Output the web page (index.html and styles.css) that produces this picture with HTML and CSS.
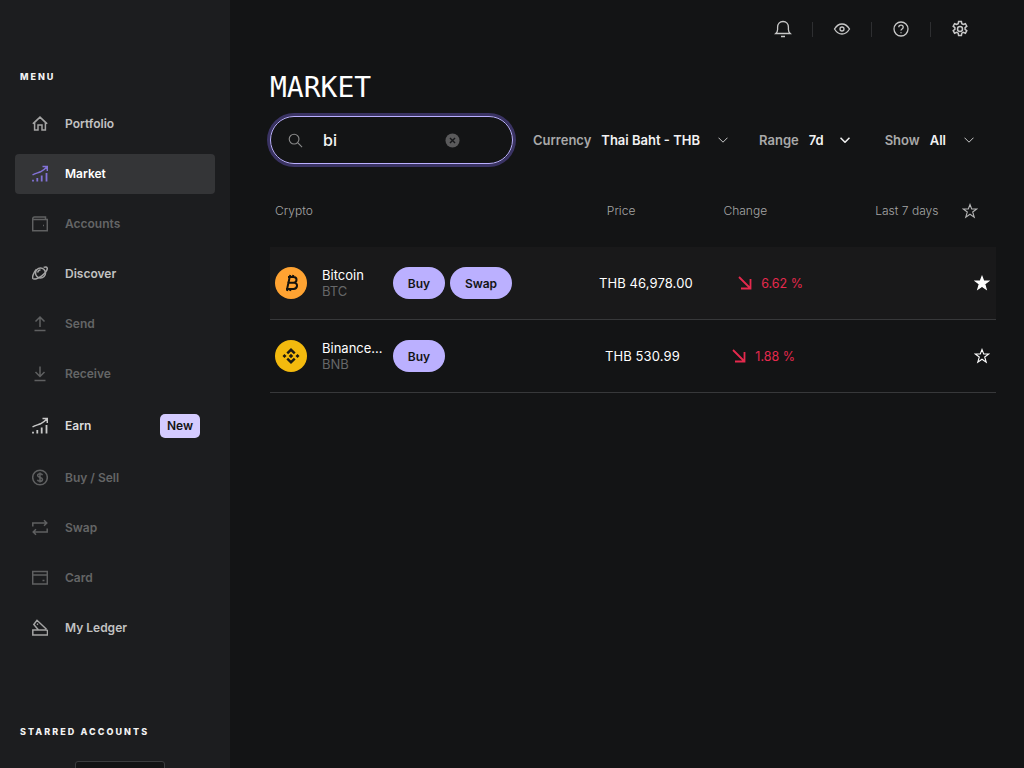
FILE: index.html
```html
<!DOCTYPE html><html lang='en'>
	<head>
		<meta charset='utf-8'>
		<title>Market</title>
		<link rel="stylesheet" href="styles.css">
	</head>
	<body>
		<div class='app'>
			<!-- sidebar -->
			<aside class='side'>
				<p class='sideLabel menuLabel'>MENU</p>
				<nav class='nav'>
					<a class='item on'><svg class='ico' viewBox='0 0 16 16'><path d='M2.600 6.900 8 1.800l5.400 5.100V14.500H10V9.500H6V14.500H2.600V6.900ZM.8 8.300 8 1.500l7.200 6.800'/></svg>Portfolio</a>
					<a class='item active'><svg class='ico' viewBox='0 0 16 16'><path d='M.5 9.500C3.500 7.500 6 7.500 8.500 6.300 11 5 13 3.500 15 1.500M10.500 1h4.800v4.500'/><path class='bars' d='M1 16v-1.800M5.300 16v-3.500M9.700 16V10M14.500 16V7.500'/></svg>Market</a>
					<a class='item off'><svg class='ico' viewBox='0 0 16 16'><path d='M.7 3.500C.7 2.500 1.300 1.500 2.500 1.500h11v2.500M.7 3.500V15.300h14.600V4H1.500M11 10h1'/></svg>Accounts</a>
					<a class='item on'><svg class='ico' viewBox='0 0 16 16'><circle cx='8.500' cy='7.500' r='5'/><path d='M4.500 3.800C1.500 6.800.1 11.500.8 12.800c1 1.600 5.700.2 9-2.400 3.300-2.500 6-6.400 5.400-7.900-.4-1-1.900-1.100-3.600-.6M5.500 7c.5-1.500 1.500-2.500 3-2.800'/></svg>Discover</a>
					<a class='item off'><svg class='ico' viewBox='0 0 16 16'><path d='M8 11.500V1.500M3.500 6 8 1.500 12.500 6M2.500 15h11'/></svg>Send</a>
					<a class='item off'><svg class='ico' viewBox='0 0 16 16'><path d='M8 1v10M3.500 6.500 8 11 12.500 6.500M2.500 15h11'/></svg>Receive</a>
					<a class='item on earn'><svg class='ico' viewBox='0 0 16 16'><path d='M.5 9.500C3.500 7.500 6 7.500 8.500 6.300 11 5 13 3.500 15 1.500M10.500 1h4.800v4.500'/><path class='bars' d='M1 16v-1.800M5.300 16v-3.500M9.700 16V10M14.500 16V7.500'/></svg>Earn<span class='newBadge'>New</span></a>
					<a class='item off'><svg class='ico' viewBox='0 0 16 16'><circle cx='8' cy='8' r='7.300'/><path d='M10.500 5.800C10.200 4.800 9.200 4.300 8 4.300 6.700 4.300 5.600 5 5.600 6.100c0 2.600 4.900 1.200 4.900 3.800 0 1.100-1.100 1.800-2.500 1.800-1.200 0-2.300-.5-2.600-1.500M8 3v10'/></svg>Buy / Sell</a>
					<a class='item off'><svg class='ico' viewBox='0 0 16 16'><path d='M.8 7V3.500h14M12 .7l2.800 2.800L12 6.300M15.200 9v3.500H1.200M4 9.700l-2.800 2.800L4 15.300'/></svg>Swap</a>
					<a class='item off'><svg class='ico' viewBox='0 0 16 16'><path d='M.7 2h14.600v12.500H.7zM.7 5.500h14.600M10.500 11h2'/></svg>Card</a>
					<a class='item on'><svg class='ico' viewBox='0 0 16 16'><path d='M.8 10.500h13.500c.8 0 1.200.6 1.200 1.300v3.700H.8ZM6.500 10.500 1.800 5 5 .8l9.500 8.900M5 4.200l1 .9'/></svg>My Ledger</a>
				</nav>
				<p class='sideLabel starLabel'>STARRED ACCOUNTS</p>
				<div class='starBox'></div>
			</aside>
			<!-- main -->
			<main class='main'>
				<div class='topBar'>
					<svg class='topIco' viewBox='0 0 18 18'><path d='M1.800 13.500c1.200-1 1.800-2 1.800-4V7.200C3.600 4 5.600 1.500 9 1.500s5.400 2.500 5.400 5.700V9.500c0 2 .6 3 1.800 4ZM7 16.500h4'/></svg>
					<span class='sep'></span>
					<svg class='topIco' viewBox='0 0 18 18'><path d='M1.500 9C3.500 5.700 6 4 9 4s5.500 1.700 7.500 5c-2 3.300-4.500 5-7.500 5S3.500 12.300 1.500 9Z'/><circle cx='9' cy='9' r='2'/></svg>
					<span class='sep'></span>
					<svg class='topIco' viewBox='0 0 18 18'><circle cx='9' cy='9' r='7'/><path d='M6.800 7.200C6.800 6 7.800 5.200 9 5.200s2.200.8 2.200 2c0 1.700-2.200 1.700-2.200 3.300M9 12.200v1'/></svg>
					<span class='sep'></span>
					<svg class='topIco gear' viewBox='0 0 18 18'><circle cx='9' cy='9' r='2.500'/><path d='M7.600 1.500h2.800l.4 2.200 1.500.8 2.100-.8 1.400 2.500-1.700 1.400v1.700l1.700 1.400-1.400 2.500-2.100-.8-1.500.8-.4 2.200H7.600l-.4-2.200-1.500-.8-2.100.8-1.400-2.500 1.700-1.400V7.600L2.200 6.200l1.400-2.500 2.100.8 1.500-.8Z'/></svg>
				</div>
				<h1 class='title'>MARKET</h1>
				<div class='filters'>
					<div class='search'>
						<svg class='searchIco' viewBox='0 0 16 16'><circle cx='6.500' cy='6.500' r='5.200'/><path d='m10.500 10.500 4.500 4.500'/></svg>
						<span class='searchText'>bi</span>
						<svg class='clearIco' viewBox='0 0 16 16'><circle class='clearDisc' cx='8' cy='8' r='7.500'/><path d='m5.300 5.300 5.400 5.400M10.700 5.300l-5.400 5.400'/></svg>
					</div>
					<div class='filter fCurrency'><span class='fLabel'>Currency</span><span class='fValue'>Thai Baht - THB</span><svg class='chev' viewBox='0 0 10 6'><path d='m.5.700 4.500 4.500L9.500.700'/></svg></div>
					<div class='filter fRange'><span class='fLabel'>Range</span><span class='fValue'>7d</span><svg class='chev bold' viewBox='0 0 10 6'><path d='m.5.700 4.500 4.500L9.500.700'/></svg></div>
					<div class='filter fShow'><span class='fLabel'>Show</span><span class='fValue'>All</span><svg class='chev' viewBox='0 0 10 6'><path d='m.5.700 4.500 4.500L9.500.700'/></svg></div>
				</div>
				<div class='tableHead'>
					<span class='hCrypto'>Crypto</span>
					<span class='hPrice'>Price</span>
					<span class='hChange'>Change</span>
					<span class='hLast'>Last 7 days</span>
					<svg class='star hStar' viewBox='0 0 16 16'><path d='M8 1.500 9.700 6H14.700L10.700 9 12.200 14.200 8 11.200 3.800 14.200 5.300 9 1.300 6H6.300Z'/></svg>
				</div>
				<div class='row first'>
					<svg class='coin' viewBox='0 0 32 32'><circle cx='16' cy='16' r='16' fill='#ffa332'/><path class='coinB' d='M13 10h5.500c4 0 4 5.500 0 5.700H12.300M12.300 15.700h7c4 .3 3.500 6.300-.8 6.300H11M14.700 10l-2.600 12M15.300 8l-.4 2M18.300 8l-.4 2M12.500 22l-.4 2M15.500 22l-.4 2'/></svg>
					<div class='names'><span class='coinName'>Bitcoin</span><span class='ticker'>BTC</span></div>
					<a class='pill buy'>Buy</a>
					<a class='pill swap'>Swap</a>
					<span class='price'>THB 46,978.00</span>
					<span class='change'><svg class='arrow' viewBox='0 0 14 14'><path d='M1 1 12.500 12.500M3 12.500h9.500V3'/></svg>6.62 %</span>
					<svg class='star rowStar' viewBox='0 0 16 16'><path class='solid' d='M8 1.500 9.700 6H14.700L10.700 9 12.200 14.200 8 11.200 3.800 14.200 5.300 9 1.300 6H6.300Z'/></svg>
				</div>
				<div class='row second'>
					<svg class='coin' viewBox='0 0 32 32'><circle cx='16' cy='16' r='16' fill='#f3ba0e'/><path fill='#1a1a14' d='M16 8l4.600 4.600-1.700 1.700L16 11.500l-2.900 2.800-1.700-1.700ZM16 24l-4.600-4.600 1.700-1.700 2.900 2.800 2.900-2.800 1.700 1.700ZM9.500 14 11.500 16l-2 2-2-2ZM22.500 14l2 2-2 2-2-2ZM16 13.800l2.200 2.200-2.200 2.200-2.200-2.200Z'/></svg>
					<div class='names'><span class='coinName'>Binance...</span><span class='ticker'>BNB</span></div>
					<a class='pill buy'>Buy</a>
					<span class='price'>THB 530.99</span>
					<span class='change'><svg class='arrow' viewBox='0 0 14 14'><path d='M1 1 12.500 12.500M3 12.500h9.500V3'/></svg>1.88 %</span>
					<svg class='star rowStar' viewBox='0 0 16 16'><path d='M8 1.500 9.700 6H14.700L10.700 9 12.200 14.200 8 11.200 3.800 14.200 5.300 9 1.300 6H6.300Z'/></svg>
				</div>
			</main>
		</div>
	</body>
</html>
```

FILE: styles.css
```css
html,body{
	margin:0;
	height:100%;
	overflow:hidden;
	background:#131415;
	font-family:Inter,"Noto Sans",sans-serif;
	color:#fff;
}
svg{
	display:block;
	flex:none;
	fill:none;
	stroke:currentColor;
}
.app{
	display:flex;
	height:768px;
	overflow:hidden;
}
/* sidebar */
.side{
	width:230px;
	flex:none;
	height:768px;
	overflow:hidden;
	background:#1c1d1f;
}
.sideLabel{
	margin:0 0 0 20px;
	font-size:9px;
	line-height:12px;
	font-weight:800;
	letter-spacing:2px;
	color:#f2f2f2;
}
.menuLabel{
	padding-top:71px;
}
.nav{
	display:flex;
	flex-direction:column;
	gap:10px;
	margin:21px 15px 0;
}
.item{
	display:flex;
	align-items:center;
	box-sizing:border-box;
	height:40px;
	padding:0 15px 1px 17px;
	border-radius:4px;
	font-size:12px;
	font-weight:600;
}
.item .ico{
	width:16px;
	height:17px;
	margin-right:17px;
	stroke-width:1.500;
	color:#a4a4a4;
}
.item .bars{
	stroke-width:1.800;
}
.item.on{
	color:#c2c2c2;
}
.item.off{
	color:#646566;
}
.item.off .ico{
	color:#5f6061;
}
.item.active{
	background:#343537;
	color:#fff;
}
.item.active .ico{
	color:#8272d6;
}
.item.earn{
	height:44px;
	color:#dcdcdc;
}
.item.earn .ico{
	color:#c8c8c8;
}
.newBadge{
	margin-left:auto;
	padding:0 7px;
	line-height:24px;
	border-radius:5px;
	background:#d4cbff;
	color:#131415;
	font-weight:600;
}
.starLabel{
	margin-top:78px;
	letter-spacing:2.050px;
}
.starBox{
	width:88px;
	height:20px;
	margin:23px 0 0 75px;
	border:1px solid #3c3d3f;
	border-radius:3px;
	background:#131415;
}
/* main */
.main{
	flex:1;
	padding:0 28px 0 40px;
}
.topBar{
	display:flex;
	align-items:center;
	gap:20px;
	height:18px;
	padding:20px 27px 0 0;
	justify-content:flex-end;
	color:#c8c8c8;
}
.topIco{
	width:18px;
	height:18px;
	stroke-width:1.300;
}
.gear{
	stroke-width:1.500;
}
.sep{
	width:1px;
	height:15px;
	background:#2e2f31;
}
.title{
	margin:31px 0 0;
	font-family:"DejaVu Sans Mono",monospace;
	font-size:28px;
	line-height:38px;
	font-weight:400;
}
/* filters */
.filters{
	display:flex;
	align-items:center;
	margin-top:9px;
	height:48px;
}
.search{
	display:flex;
	align-items:center;
	box-sizing:border-box;
	width:243px;
	height:48px;
	padding:0 52px 0 17px;
	border:1px solid #bbb0ff;
	border-radius:24px;
	box-shadow:0 0 0 3px #3a3363;
}
.searchIco{
	width:15px;
	height:15px;
	color:#8a8a8a;
	stroke-width:1.200;
}
.searchText{
	margin-left:20px;
	font-size:16px;
	font-weight:500;
	color:#f4f4f4;
}
.clearIco{
	width:15px;
	height:15px;
	margin-left:auto;
	color:#17181a;
	stroke-width:1.500;
}
.clearDisc{
	fill:#5a5a5b;
	stroke:none;
}
.filter{
	display:flex;
	align-items:center;
	font-size:13px;
	font-weight:600;
}
.fLabel{
	color:#a9a9a9;
}
.fValue{
	color:#f2f2f2;
}
.fCurrency{
	margin-left:20px;
}
.fCurrency .fValue{
	margin-left:10px;
}
.fCurrency .chev{
	margin-left:18px;
}
.fRange{
	margin-left:31px;
}
.fRange .fValue{
	margin-left:10px;
}
.fRange .chev{
	margin-left:16px;
}
.fShow{
	margin-left:35px;
}
.fShow .fValue{
	margin-left:10px;
}
.fShow .chev{
	margin-left:18px;
}
.chev{
	width:10px;
	height:6px;
	color:#c8c8c8;
	stroke-width:1;
}
.chev.bold{
	color:#f0f0f0;
	stroke-width:1.600;
}
/* table */
.tableHead{
	display:flex;
	align-items:center;
	height:18px;
	margin-top:37px;
	padding-left:5px;
	font-size:12px;
	font-weight:300;
	letter-spacing:.02px;
	color:#a6a6a6;
}
.hPrice{
	margin-left:294px;
}
.hChange{
	margin-left:88px;
}
.hLast{
	margin-left:108px;
}
.star{
	width:16px;
	height:16px;
	color:#fff;
	stroke-width:1.100;
}
.hStar{
	margin:2px 0 0 23px;
	color:#b5b5b5;
}
.row{
	display:flex;
	align-items:center;
	height:72px;
	padding-left:5px;
	border-bottom:1px solid #37383a;
}
.row.first{
	margin-top:28px;
	background:#19191a;
}
.coin{
	width:32px;
	height:32px;
	stroke:none;
}
.coinB{
	stroke:#14120d;
	stroke-width:2;
}
.names{
	display:flex;
	flex-direction:column;
	width:71px;
	margin-left:15px;
	font-size:13px;
	line-height:16px;
}
.coinName{
	color:#fff;
}
.ticker{
	color:#666768;
}
.pill{
	display:flex;
	align-items:center;
	justify-content:center;
	height:32px;
	border-radius:16px;
	background:#bbb0ff;
	color:#131415;
	font-size:12px;
	font-weight:600;
}
.buy{
	width:52px;
}
.swap{
	width:62px;
	margin-left:5px;
}
.price{
	font-size:13px;
	letter-spacing:.1px;
	color:#fff;
}
.first .price{
	margin-left:87px;
}
.second .price{
	margin-left:160px;
}
.change{
	display:flex;
	align-items:center;
	font-size:12.500px;
	color:#e5294d;
}
.first .change{
	margin-left:45px;
}
.second .change{
	margin-left:52px;
}
.arrow{
	width:14px;
	height:14px;
	margin-right:9.500px;
	stroke-width:1.800;
}
.rowStar{
	margin-left:auto;
	margin-right:6px;
}
.solid{
	fill:currentColor;
}
```
